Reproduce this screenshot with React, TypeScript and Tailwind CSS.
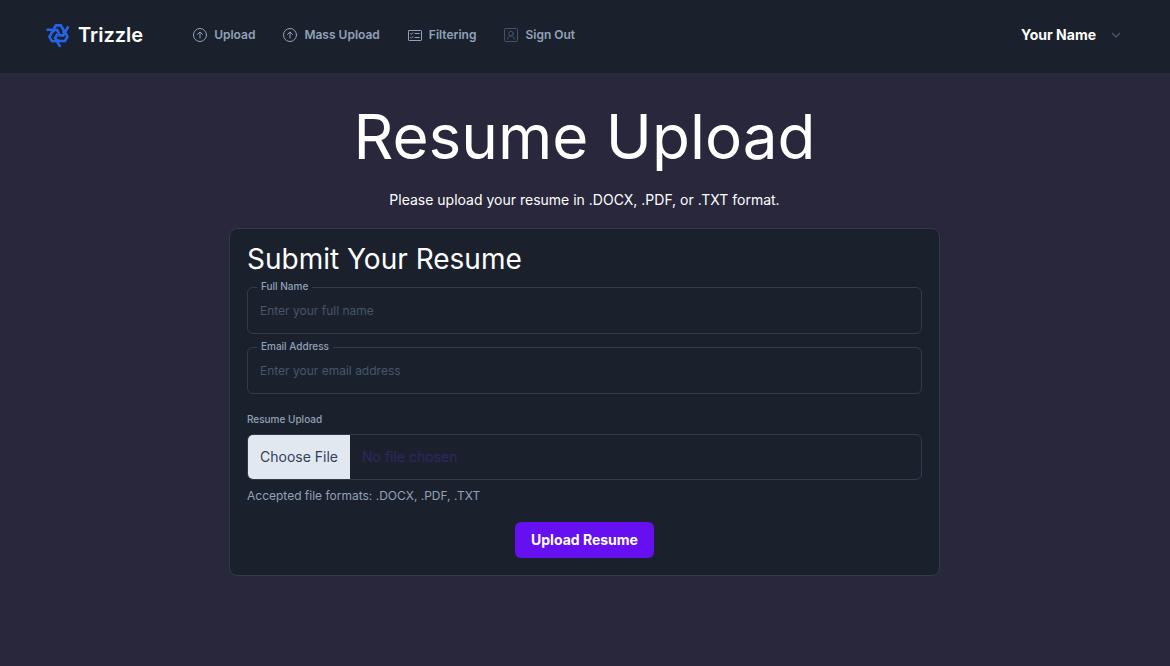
import type { ReactNode } from "react";

function Logo() {
  const arm = "M22.4 3.4 17.2 12.4H12.4M7.8 5.8 9.900 2.400H14.800L17.600 7.200V10";
  return (
    <svg viewBox="0 0 24 24" className="size-6 text-[#2563eb]" fill="none" stroke="currentColor" strokeWidth="2.6" aria-hidden="true">
      <path d={arm} />
      <path d={arm} transform="rotate(120 12.4 11.4)" />
      <path d={arm} transform="rotate(240 12.4 11.4)" />
    </svg>
  );
}

function CircleUpIcon() {
  return (
    <svg viewBox="0 0 16 16" className="size-4 text-slate-400" fill="none" stroke="currentColor" strokeWidth="1" strokeLinecap="round" strokeLinejoin="round" aria-hidden="true">
      <circle cx="8" cy="8" r="6.5" />
      <path d="M8 11V5.2M5.6 7.4 8 5l2.4 2.4" />
    </svg>
  );
}

function ChecklistIcon() {
  return (
    <svg viewBox="0 0 16 16" className="size-4 text-slate-400" fill="none" stroke="currentColor" strokeWidth="1" strokeLinecap="round" strokeLinejoin="round" aria-hidden="true">
      <rect x="1.5" y="3.5" width="13" height="10" rx="0.6" />
      <path d="M3.6 6.6l.8.8 1.4-1.6M3.6 10.4l.8.8 1.4-1.6M8 6.5h4.2M8 10.5h4.2" />
    </svg>
  );
}

function PersonIcon() {
  return (
    <svg viewBox="0 0 16 16" className="size-4 text-slate-600" fill="none" stroke="currentColor" strokeWidth="1" strokeLinecap="round" strokeLinejoin="round" aria-hidden="true">
      <rect x="1.5" y="1.5" width="13" height="13" rx="1" />
      <circle cx="8" cy="6.6" r="2.3" />
      <path d="M4.6 12.2c.2-2 1.5-3.3 3.4-3.3s3.2 1.3 3.4 3.3" />
    </svg>
  );
}

function NavLink({ icon, children }: { icon: ReactNode; children: ReactNode }) {
  return (
    <a href="#" className="flex items-center gap-1.5 text-xs leading-4 font-semibold text-slate-400">
      {icon}
      {children}
    </a>
  );
}

function TextField({ id, label, type, placeholder }: { id: string; label: string; type: string; placeholder: string }) {
  return (
    <div className="relative">
      <label htmlFor={id} className="absolute -top-[9px] left-2.5 bg-[#1b212c] px-1 text-[10px] leading-4 font-medium text-slate-400">
        {label}
      </label>
      <input
        id={id}
        type={type}
        placeholder={placeholder}
        className="block h-[47px] w-full rounded-md border border-[#323a4d] bg-transparent px-3 text-xs text-slate-200 placeholder:text-slate-600"
      />
    </div>
  );
}

export default function App() {
  return (
    <div className="min-h-screen bg-[#29273c] font-['Inter',sans-serif] text-white">
      <header className="flex h-[73px] items-center bg-[#1b212c] pr-12 pb-1 pl-[46px]">
        <a href="#" className="flex items-center gap-2 text-xl font-semibold">
          <Logo />
          Trizzle
        </a>
        <nav className="ml-[49px] flex items-center gap-[27px]">
          <NavLink icon={<CircleUpIcon />}>Upload</NavLink>
          <NavLink icon={<CircleUpIcon />}>Mass Upload</NavLink>
          <NavLink icon={<ChecklistIcon />}>Filtering</NavLink>
          <NavLink icon={<PersonIcon />}>Sign Out</NavLink>
        </nav>
        <button type="button" className="ml-auto flex items-center gap-3.5 text-sm font-bold">
          Your Name
          <svg viewBox="0 0 12 12" className="size-3 text-slate-600" fill="none" stroke="currentColor" strokeWidth="1.5" aria-hidden="true">
            <path d="M2 4l4 4 4-4" />
          </svg>
        </button>
      </header>

      <main className="flex flex-col items-center pt-6 pr-[17px] pl-4">
        <h1 className="text-[62px] leading-20">Resume Upload</h1>
        <p className="mt-[13px] text-sm">Please upload your resume in .DOCX, .PDF, or .TXT format.</p>

        <form className="mt-[18px] w-full max-w-[711px] rounded-lg border border-[#323a4d] bg-[#1b212c] px-[17px] pt-4 pb-[17px]">
          <h2 className="text-[28px] leading-7">Submit Your Resume</h2>
          <div className="mt-3.5 flex flex-col gap-[13px]">
            <TextField id="full-name" label="Full Name" type="text" placeholder="Enter your full name" />
            <TextField id="email" label="Email Address" type="email" placeholder="Enter your email address" />
          </div>
          <label htmlFor="resume" className="mt-[17px] block text-[10px] leading-4 font-medium text-slate-400">
            Resume Upload
          </label>
          <input
            id="resume"
            type="file"
            accept=".docx,.pdf,.txt"
            className="mt-[7px] block w-full rounded-md border border-[#323a4d] text-sm leading-5 text-[#2c2860] file:mr-3 file:border-0 file:bg-slate-200 file:px-3 file:py-3 file:text-slate-700"
          />
          <p className="mt-1.5 text-xs leading-5 text-slate-400">Accepted file formats: .DOCX, .PDF, .TXT</p>
          <div className="mt-4 flex justify-center">
            <button type="submit" className="h-9 rounded-md bg-[#6610f2] px-4 text-sm font-bold">
              Upload Resume
            </button>
          </div>
        </form>
      </main>
    </div>
  );
}
